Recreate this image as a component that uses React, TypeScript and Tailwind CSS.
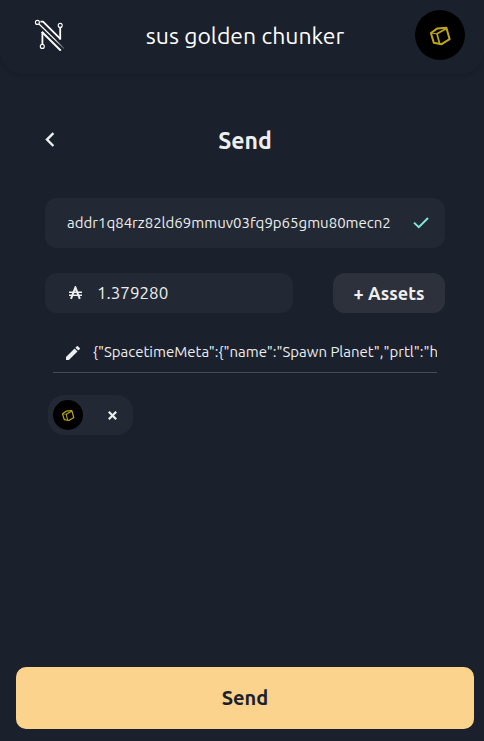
import React, { useState } from "react";

function Cube({ className }: { className: string }) {
  return (
    <svg viewBox="0 0 50 50" className={className} aria-hidden="true">
      <circle cx="25" cy="25" r="25" fill="#000" />
      <g fill="none" stroke="#bda714" strokeLinejoin="round" strokeLinecap="round">
        <path strokeWidth="2" d="M15.9 23 22.4 18.4 31.4 17.8 34.6 29.2 26.6 34.2 18.8 32.8Z" />
        <path strokeWidth="1.7" d="M31 18.8 22 23.8 24.4 33" />
        <path strokeWidth="1" d="M16.4 23.2 22 23.8" />
      </g>
    </svg>
  );
}

function Logo() {
  return (
    <svg viewBox="0 0 30 32" className="h-8 w-[30px]" fill="none" stroke="#fff" aria-hidden="true">
      <defs>
        <linearGradient id="fade" gradientUnits="userSpaceOnUse" x1="4" y1="4" x2="31" y2="31">
          <stop offset="0.6" stopColor="#fff" />
          <stop offset="1" stopColor="#fff" stopOpacity="0.1" />
        </linearGradient>
      </defs>
      <circle cx="3.4" cy="3.4" r="2" strokeWidth="1.1" />
      <circle cx="26.2" cy="6.4" r="2" strokeWidth="1.1" />
      <circle cx="8.3" cy="27.4" r="2" strokeWidth="1.1" />
      <path d="M5 5 30.5 30" stroke="url(#fade)" strokeWidth="1.2" />
      <path d="M8.4 25.4V13" strokeWidth="1.8" />
      <path d="M7.8 12.8 26.8 31.6" strokeWidth="2" />
      <path d="M6.4 2.6H9L26.6 20.2" strokeWidth="1.9" />
      <path d="M26.2 8.4V20.6" strokeWidth="1.8" />
    </svg>
  );
}

export default function App() {
  const [address, setAddress] = useState("addr1q84rz82ld69mmuv03fq9p65gmu80mecn2");
  const [amount, setAmount] = useState("1.379280");
  const [metadata, setMetadata] = useState('{"SpacetimeMeta":{"name":"Spawn Planet","prtl":"h');

  return (
    <div className="flex min-h-screen flex-col bg-[#1a202c] font-['Ubuntu','Noto_Sans',sans-serif] text-[#edeeee]">
      <header className="flex h-[74px] items-start justify-between rounded-b-3xl pt-[10px] pr-[19px] pl-[25px] text-white shadow-[0_2px_4px_rgba(0,0,0,0.1)]">
        <div className="flex h-[50px] w-[50px] items-center pl-[9px]">
          <Logo />
        </div>
        <h1 className="text-[23px] leading-[52px]">sus golden chunker</h1>
        <button type="button" aria-label="Account" className="rounded-full">
          <Cube className="size-[50px]" />
        </button>
      </header>

      <main className="flex flex-1 flex-col pt-[50px] pr-[39px] pl-[45px]">
        <div className="grid grid-cols-[40px_1fr_40px] items-start">
          <button type="button" aria-label="Back" className="flex h-8 items-center">
            <svg viewBox="0 0 10 16" className="h-4 w-[10px]" fill="none" stroke="currentColor" strokeWidth="2.4" aria-hidden="true">
              <path d="M8.4 1.2 2 7.6 8.4 14" />
            </svg>
          </button>
          <h2 className="text-center text-[23px] leading-[34px] font-bold">Send</h2>
        </div>

        <div className="mt-10 flex h-[50px] items-center rounded-xl bg-[#232934] pr-4 pl-[22px]">
          <input
            aria-label="Address"
            value={address}
            onChange={(e) => setAddress(e.target.value)}
            className="min-w-0 flex-1 bg-transparent text-[15px] outline-none"
          />
          <svg viewBox="0 0 16 12" className="h-3 w-4" fill="none" stroke="#81e6d9" strokeWidth="2" aria-hidden="true">
            <path d="M1 5.6 5.8 10.2 15 1" />
          </svg>
        </div>

        <div className="mt-[25px] flex gap-10">
          <div className="flex h-10 min-w-0 flex-1 items-center gap-[15px] rounded-xl bg-[#232934] pr-4 pl-[23px]">
            <svg viewBox="0 0 14 14" className="h-[14px] w-[14px] shrink-0" fill="none" stroke="currentColor" aria-hidden="true">
              <path d="M3 12.8 7.4 1.4 11.8 12.8" strokeWidth="2" />
              <path d="M1 6.2H14M1 9.2H14" strokeWidth="1.4" />
            </svg>
            <input
              aria-label="Amount"
              value={amount}
              onChange={(e) => setAmount(e.target.value)}
              className="min-w-0 flex-1 bg-transparent text-[17px] outline-none"
            />
          </div>
          <button type="button" className="h-10 w-28 rounded-xl bg-[#2d313c] text-[18px] font-bold">
            + Assets
          </button>
        </div>

        <div className="mx-2 mt-5 flex h-10 items-center gap-[13px] border-b border-[#474b55] pl-[13px]">
          <svg viewBox="0 0 14 14" className="h-[14px] w-[14px] shrink-0" fill="currentColor" aria-hidden="true">
            <path d="M0 11.1V14H2.9L11.5 5.4 8.6 2.5ZM13.7 3.2A.8.8 0 0 0 13.7 2.1L11.9.3A.8.8 0 0 0 10.8.3L9.4 1.7 12.3 4.6Z" />
          </svg>
          <input
            aria-label="Metadata"
            value={metadata}
            onChange={(e) => setMetadata(e.target.value)}
            className="min-w-0 flex-1 bg-transparent text-[15px] outline-none"
          />
        </div>

        <div className="mt-[22px] ml-[3px] flex h-10 w-[85px] items-center justify-between rounded-2xl bg-[#232934] pr-4 pl-[5px]">
          <Cube className="size-[30px]" />
          <button type="button" aria-label="Remove asset">
            <svg viewBox="0 0 9 9" className="size-[9px]" fill="none" stroke="currentColor" strokeWidth="2.2" aria-hidden="true">
              <path d="M.8.8 8.2 8.2M8.2.8.8 8.2" />
            </svg>
          </button>
        </div>
      </main>

      <footer className="pr-[10px] pb-3 pl-4">
        <button type="button" className="h-[62px] w-full rounded-[10px] bg-[#fbd38d] text-[20px] font-bold text-[#1a202c]">
          Send
        </button>
      </footer>
    </div>
  );
}
